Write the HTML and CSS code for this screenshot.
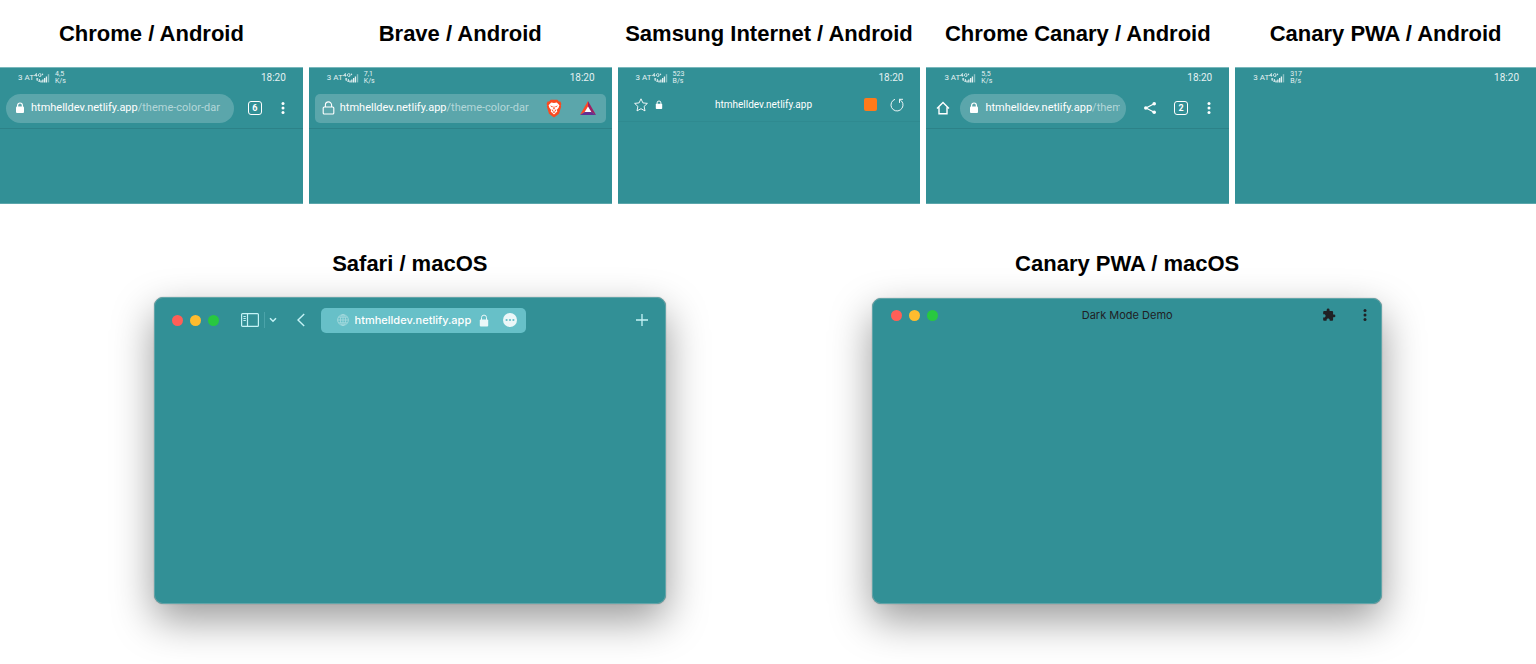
FILE: index.html
```
<!DOCTYPE html>
<html lang="en">
<head>
    <meta charset="UTF-8">
    <meta name="viewport" content="width=device-width, initial-scale=1.0">
    <title>theme-color in different browsers</title>
    <link rel="stylesheet" href="styles.css">
</head>
<body>
    <!-- Shared icons -->
    <svg class="sprite" aria-hidden="true">
        <symbol id="signal" viewBox="0 0 16 10">
            <path d="M2.400 .4L.4 2.600h3M2.400 .4v3.200M7 1.200C6 .2 4.400.6 4.400 2s1.600 2 2.600 1.200V2H6M7.600 1.400h1.600M8.400.6v1.600" fill="none" stroke="currentColor" stroke-width=".8"/>
            <path d="M2.200 6h2M3.200 5v3M4.200 8.200h2M5.400 6v2.600" fill="none" stroke="currentColor" stroke-width=".9"/>
            <path d="M6.400 7.600h1.300v1.800H6.400zM8.200 6.400h1.300v3H8.200zM10 5h1.300v4.400H10zM11.800 3.600h1.300v5.800h-1.300z" fill="currentColor"/>
            <path d="M13.800 1.200h1.400v8.200h-1.400z" fill="currentColor" opacity=".5"/>
        </symbol>
        <symbol id="lock" viewBox="0 0 10 12">
            <path d="M2.600 5V3.400a2.400 2.400 0 0 1 4.800 0V5" fill="none" stroke="currentColor" stroke-width="1.2"/>
            <rect x="1" y="4.4" width="8" height="6.6" rx="1" fill="currentColor"/>
        </symbol>
        <symbol id="dots" viewBox="0 0 14 14">
            <circle cx="7" cy="2.4" r="1.5" fill="currentColor"/>
            <circle cx="7" cy="7" r="1.5" fill="currentColor"/>
            <circle cx="7" cy="11.6" r="1.5" fill="currentColor"/>
        </symbol>
    </svg>

    <main>
        <div class="phones">
            <section class="phone">
                <h2>Chrome / Android</h2>
                <div class="screen">
                    <div class="status">
                        <span>3 AT</span>
                        <svg class="signal"><use href="#signal"/></svg>
                        <span class="speed">4,5<br>K/s</span>
                        <time>18:20</time>
                    </div>
                    <div class="toolbar chrome">
                        <div class="address">
                            <svg class="lock"><use href="#lock"/></svg>
                            <a class="url" href="#">htmhelldev.netlify.app<span>/theme-color-dar</span></a>
                        </div>
                        <button class="tabs" aria-label="Tabs">6</button>
                        <button class="icon-btn" aria-label="Menu"><svg><use href="#dots"/></svg></button>
                    </div>
                </div>
            </section>

            <section class="phone">
                <h2>Brave / Android</h2>
                <div class="screen">
                    <div class="status">
                        <span>3 AT</span>
                        <svg class="signal"><use href="#signal"/></svg>
                        <span class="speed">7,1<br>K/s</span>
                        <time>18:20</time>
                    </div>
                    <div class="toolbar brave">
                        <div class="address">
                            <svg class="lock-outline" viewBox="0 0 13 14">
                                <path d="M3.400 6V4a3.100 3.100 0 0 1 6.200 0v2" fill="none" stroke="currentColor" stroke-width="1.1"/>
                                <rect x="1.2" y="6" width="10.6" height="7" rx="1" fill="none" stroke="currentColor" stroke-width="1.1"/>
                            </svg>
                            <a class="url" href="#">htmhelldev.netlify.app<span>/theme-color-dar</span></a>
                            <button class="lion" aria-label="Brave Shields">
                                <svg viewBox="0 0 16 19">
                                    <path d="M4.600.8h6.800l1.400 1.600 1.600.2 1 2.400-.6 1.400.4 1.200-2.200 7.200L8 18.600 3 14.800.8 7.600l.4-1.200L.6 5l1-2.400 1.600-.2z" fill="#fb4a20"/>
                                    <path d="M5.200 3.600L8 4.100l2.800-.5 2.600 2.600-.8 2.600-1.800 2.200.5 1.400L8 15.400l-3.300-3 .5-1.400-1.800-2.200-.8-2.600z" fill="#fff"/>
                                    <path d="M4 6.400l2.800.8-.6 1.200zM12 6.400l-2.800.8.6 1.200zM8 6.400l.8 3L8 10.800l-.8-1.400zM5.600 10l1.800 1.600-.9.8zM10.400 10l-1.800 1.600.9.8zM6.400 13L8 12.200 9.600 13 8 14z" fill="#fb4a20"/>
                                </svg>
                            </button>
                            <button class="bat" aria-label="Brave Rewards">
                                <svg viewBox="0 0 16 14">
                                    <path d="M8 0L0 14l5-3 3-5z" fill="#ff4724"/>
                                    <path d="M8 0l8 14-5-3-3-5z" fill="#9e1f63"/>
                                    <path d="M0 14h16l-5-3H5z" fill="#662d91"/>
                                    <path d="M8 5.400L11.300 11H4.700z" fill="#fff"/>
                                </svg>
                            </button>
                        </div>
                    </div>
                </div>
            </section>

            <section class="phone">
                <h2>Samsung Internet / Android</h2>
                <div class="screen">
                    <div class="status">
                        <span>3 AT</span>
                        <svg class="signal"><use href="#signal"/></svg>
                        <span class="speed">523<br>B/s</span>
                        <time>18:20</time>
                    </div>
                    <div class="toolbar samsung">
                        <button class="icon-btn" aria-label="Bookmark">
                            <svg viewBox="0 0 14 14"><path d="M7 .8l1.900 4.100 4.500.5-3.300 3 .9 4.500L7 10.700 3 12.900l.9-4.500-3.300-3 4.500-.5z" fill="none" stroke="currentColor" stroke-width=".9" stroke-linejoin="round"/></svg>
                        </button>
                        <svg class="lock"><use href="#lock"/></svg>
                        <input type="text" aria-label="Address" value="htmhelldev.netlify.app">
                        <button class="extension" aria-label="Extension"></button>
                        <button class="icon-btn" aria-label="Reload">
                            <svg viewBox="0 0 14 14"><path d="M5 1.300A6 6 0 1 0 11.600 3.100L9.600 1.300M13 1.300H9.500v3.600" fill="none" stroke="currentColor" stroke-width=".9"/></svg>
                        </button>
                    </div>
                </div>
            </section>

            <section class="phone">
                <h2>Chrome Canary / Android</h2>
                <div class="screen">
                    <div class="status">
                        <span>3 AT</span>
                        <svg class="signal"><use href="#signal"/></svg>
                        <span class="speed">5,5<br>K/s</span>
                        <time>18:20</time>
                    </div>
                    <div class="toolbar chrome canary">
                        <button class="icon-btn" aria-label="Home">
                            <svg viewBox="0 0 14 14"><path d="M1 7.400L7 1.400l6 6M3 6.200v6.600h8V6.200" fill="none" stroke="currentColor" stroke-width="1.4"/></svg>
                        </button>
                        <div class="address">
                            <svg class="lock"><use href="#lock"/></svg>
                            <a class="url" href="#">htmhelldev.netlify.app<span>/them</span></a>
                        </div>
                        <button class="icon-btn share" aria-label="Share">
                            <svg viewBox="0 0 14 14">
                                <path d="M11.200 2.800L3 7l8.200 4.200" fill="none" stroke="currentColor" stroke-width="1.2"/>
                                <circle cx="11.2" cy="2.8" r="1.8" fill="currentColor"/>
                                <circle cx="2.8" cy="7" r="1.8" fill="currentColor"/>
                                <circle cx="11.2" cy="11.2" r="1.8" fill="currentColor"/>
                            </svg>
                        </button>
                        <button class="tabs" aria-label="Tabs">2</button>
                        <button class="icon-btn" aria-label="Menu"><svg><use href="#dots"/></svg></button>
                    </div>
                </div>
            </section>

            <section class="phone">
                <h2>Canary PWA / Android</h2>
                <div class="screen">
                    <div class="status">
                        <span>3 AT</span>
                        <svg class="signal"><use href="#signal"/></svg>
                        <span class="speed">317<br>B/s</span>
                        <time>18:20</time>
                    </div>
                </div>
            </section>
        </div>

        <div class="desktops">
            <section class="desktop">
                <h2>Safari / macOS</h2>
                <div class="window">
                    <div class="titlebar safari">
                        <div class="lights"><i class="red"></i><i class="yellow"></i><i class="green"></i></div>
                        <button class="sidebar" aria-label="Sidebar">
                            <svg viewBox="0 0 18 14">
                                <rect x=".6" y=".6" width="16.8" height="12.8" rx="1" fill="none" stroke="currentColor" stroke-width="1.2"/>
                                <path d="M6.500.6v12.800" stroke="currentColor" stroke-width="1.2"/>
                                <path d="M2.400 3.500h2.400M2.400 5.500h2.400M2.400 7.500h2.400" stroke="currentColor" stroke-width="1"/>
                            </svg>
                        </button>
                        <button class="chevron" aria-label="Tab groups">
                            <svg viewBox="0 0 8 6"><path d="M1 1.200l3 3 3-3" fill="none" stroke="currentColor" stroke-width="1.5"/></svg>
                        </button>
                        <button class="back" aria-label="Back">
                            <svg viewBox="0 0 8 14"><path d="M7.200 1L1 7l6.200 6" fill="none" stroke="currentColor" stroke-width="1.4"/></svg>
                        </button>
                        <div class="safari-address">
                            <svg class="globe" viewBox="0 0 12 12">
                                <g fill="none" stroke="currentColor" stroke-width=".8">
                                    <circle cx="6" cy="6" r="5.4"/>
                                    <ellipse cx="6" cy="6" rx="2.6" ry="5.4"/>
                                    <path d="M6 .6v10.800M.6 6h10.800M1.400 3.200h9.200M1.400 8.800h9.200"/>
                                </g>
                            </svg>
                            <input type="text" aria-label="Address" value="htmhelldev.netlify.app">
                            <svg class="safari-lock" viewBox="0 0 10 13">
                                <path d="M2.500 6V3.600a2.500 2.500 0 0 1 5 0V6" fill="none" stroke="currentColor" stroke-width="1"/>
                                <rect x=".8" y="5.4" width="8.4" height="7" rx="1" fill="currentColor"/>
                            </svg>
                            <button class="more" aria-label="More">
                                <svg viewBox="0 0 14 14">
                                    <circle cx="7" cy="7" r="7" fill="#ecf7f8"/>
                                    <g fill="#67c0c8"><circle cx="3.6" cy="7" r="1.1"/><circle cx="7" cy="7" r="1.1"/><circle cx="10.4" cy="7" r="1.1"/></g>
                                </svg>
                            </button>
                        </div>
                        <button class="new-tab" aria-label="New tab">
                            <svg viewBox="0 0 12 12"><path d="M6 0v12M0 6h12" stroke="currentColor" stroke-width="1.3"/></svg>
                        </button>
                    </div>
                </div>
            </section>

            <section class="desktop">
                <h2>Canary PWA / macOS</h2>
                <div class="window pwa">
                    <div class="titlebar">
                        <div class="lights"><i class="red"></i><i class="yellow"></i><i class="green"></i></div>
                        <span class="title">Dark Mode Demo</span>
                        <div class="actions">
                            <button class="icon-btn" aria-label="Extensions">
                                <svg viewBox="0 0 24 24"><path d="M20.500 11H19V7c0-1.100-.9-2-2-2h-4V3.500a2.500 2.500 0 0 0-5 0V5H4c-1.100 0-1.990.9-1.990 2v3.800H3.500c1.490 0 2.700 1.210 2.700 2.700s-1.210 2.700-2.700 2.700H2V20c0 1.100.9 2 2 2h3.800v-1.500c0-1.490 1.210-2.700 2.700-2.700s2.700 1.210 2.700 2.700V22H17c1.100 0 2-.9 2-2v-4h1.500a2.500 2.500 0 0 0 0-5z" fill="currentColor"/></svg>
                            </button>
                            <button class="icon-btn" aria-label="Menu"><svg><use href="#dots"/></svg></button>
                        </div>
                    </div>
                </div>
            </section>
        </div>
    </main>
</body>
</html>
```
FILE: styles.css
```
body {
    margin: 0;
    background: #fff;
    color: #000;
    font-family: Roboto, "Liberation Sans", sans-serif;
    overflow-x: hidden;
}

.sprite {
    display: none;
}

svg {
    display: block;
    flex-shrink: 0;
}

h2 {
    margin: 0;
    font-family: "Liberation Sans", Arial, sans-serif;
    font-size: 22px;
    line-height: 26px;
    font-weight: bold;
    text-align: center;
    white-space: nowrap;
}

button {
    display: block;
    flex-shrink: 0;
    padding: 0;
    border: none;
    background: none;
    color: inherit;
    font-family: inherit;
    cursor: pointer;
}

button svg {
    width: 100%;
    height: 100%;
}

input {
    width: 100%;
    min-width: 0;
    padding: 0;
    border: none;
    outline: none;
    background: none;
    color: inherit;
    font-family: inherit;
}

/* Android */

.phones {
    display: grid;
    grid-template-columns: repeat(4, 303fr) 301fr;
    gap: 6px;
    padding-top: 21px;
}

.phone {
    min-width: 0;
}

.screen {
    box-sizing: border-box;
    height: 137px;
    margin-top: 20px;
    background: #329096;
    border-top: 1px solid #7ab8bc;
    border-bottom: 1px solid #5ba6ab;
    color: #fff;
}

.status {
    display: flex;
    align-items: center;
    height: 20px;
    padding: 0 17px 0 18px;
    font-size: 8px;
    line-height: 10px;
    color: #e4f1f2;
}

.signal {
    width: 16px;
    height: 10px;
}

.speed {
    margin-left: 5px;
    font-size: 7px;
    line-height: 7px;
}

.status time {
    margin-left: auto;
    font-size: 10px;
}

.toolbar {
    display: flex;
    align-items: center;
    box-sizing: border-box;
    height: 41px;
    border-bottom: 1px solid #2c8288;
}

.address {
    display: flex;
    align-items: center;
    flex: 1;
    min-width: 0;
    height: 29px;
    background: #5ba6ab;
}

.url {
    flex: 1;
    min-width: 0;
    overflow: hidden;
    white-space: nowrap;
    color: #fff;
    font-size: 11px;
    line-height: 16px;
    text-decoration: none;
}

.url span {
    color: #b4d7d9;
}

.lock {
    width: 10px;
    height: 12px;
}

.icon-btn {
    width: 14px;
    height: 14px;
}

.tabs {
    box-sizing: border-box;
    width: 14px;
    height: 14px;
    border: 1px solid #fff;
    border-radius: 3px;
    font-size: 9px;
    line-height: 12px;
    font-weight: bold;
}

.chrome {
    gap: 14px;
    padding: 0 13px 0 6px;
}

.chrome .address {
    gap: 6px;
    padding: 0 6px 0 9px;
    border-radius: 15px;
}

.canary {
    padding-left: 10px;
}

.canary .address {
    margin: 0 3px 0 -4px;
}

.share {
    margin-right: 3px;
}

.brave {
    padding: 0 6px;
}

.brave .address {
    padding: 0 10px 0 7px;
    border-radius: 5px;
}

.lock-outline {
    width: 13px;
    height: 14px;
    margin-right: 5px;
}

.lion {
    width: 16px;
    height: 19px;
    margin-left: 9px;
}

.bat {
    width: 16px;
    height: 14px;
    margin-left: 18px;
}

.samsung {
    height: 34px;
    padding: 0 16px;
    border-bottom-color: #2f8a90;
}

.samsung .lock {
    width: 8px;
    height: 10px;
    margin-left: 7px;
}

.samsung input {
    flex: 1;
    font-size: 10px;
    line-height: 16px;
    text-align: center;
}

.extension {
    width: 13px;
    height: 13px;
    margin-right: 13px;
    border-radius: 2px;
    background: #ff7a1a;
}

/* macOS */

.desktops {
    display: grid;
    grid-template-columns: 512fr 510fr;
    gap: 206px;
    padding: 47px 10% 60px;
}

.window {
    box-sizing: border-box;
    aspect-ratio: 5 / 3;
    margin-top: 20px;
    border: 1px solid #62a5a9;
    border-radius: 9px;
    background: #329096;
    box-shadow: 0 0 1px rgba(0, 0, 0, 0.5), 0 16px 42px rgba(0, 0, 0, 0.4);
    font-family: Inter, sans-serif;
}

.titlebar {
    display: flex;
    align-items: center;
    height: 32px;
    padding: 0 17px;
}

.lights {
    display: flex;
    gap: 7px;
}

.lights i {
    width: 11px;
    height: 11px;
    border-radius: 50%;
}

.red {
    background: #ff5f57;
}

.yellow {
    background: #febc2e;
}

.green {
    background: #28c840;
}

.safari {
    height: 44px;
    color: #c5f3f6;
}

.sidebar {
    width: 18px;
    height: 14px;
    margin-left: 22px;
}

.chevron {
    box-sizing: content-box;
    width: 8px;
    height: 6px;
    margin-left: 5px;
    padding: 5px 0 5px 4px;
    border-left: 1px solid #4ba3a9;
}

.back {
    width: 8px;
    height: 14px;
    margin-left: 20px;
}

.safari-address {
    display: flex;
    align-items: center;
    flex: 0 1 205px;
    min-width: 0;
    box-sizing: border-box;
    height: 25px;
    margin-left: 16px;
    padding: 0 9px 0 16px;
    border-radius: 5px;
    background: #67c0c8;
    color: #fff;
}

.globe {
    width: 12px;
    height: 12px;
    color: #a9dce0;
}

.safari-address input {
    flex: 1;
    margin-left: 6px;
    font-size: 11px;
    line-height: 16px;
    font-weight: 500;
}

.safari-lock {
    width: 10px;
    height: 13px;
    color: #ecf7f8;
}

.more {
    width: 14px;
    height: 14px;
    margin-left: 14px;
}

.new-tab {
    width: 12px;
    height: 12px;
    margin-left: auto;
}

.pwa {
    margin-top: 21px;
    color: #202124;
}

.pwa .titlebar {
    display: grid;
    grid-template-columns: 1fr auto 1fr;
    padding: 0 9px 0 18px;
}

.title {
    margin-right: 9px;
    font-size: 11px;
    line-height: 16px;
}

.actions {
    display: flex;
    justify-content: flex-end;
    gap: 22px;
}
```
